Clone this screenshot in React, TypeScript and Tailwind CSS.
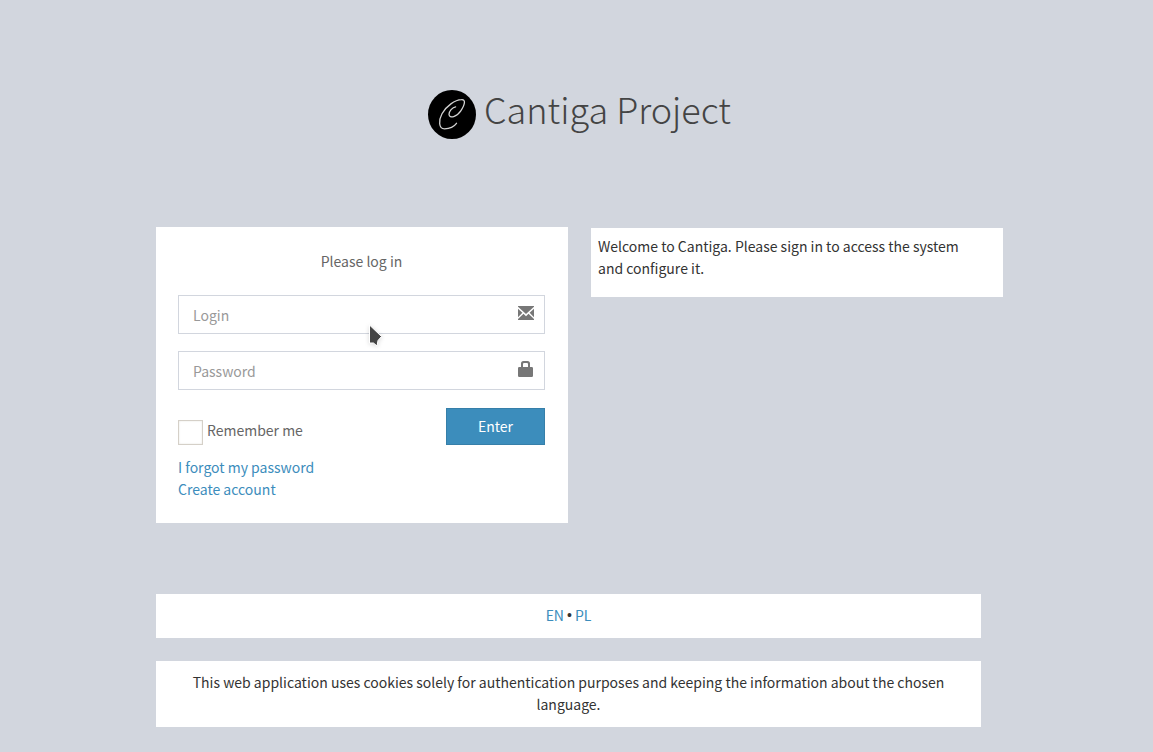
import { useState } from "react";

function Logo() {
  return (
    <svg viewBox="0 0 48 49" className="h-[49px] w-12 shrink-0" aria-hidden="true">
      <ellipse cx="24" cy="24.5" rx="24" ry="24.5" fill="#000" />
      <path
        d="M27.600 16.800C24.500 17.200 20.800 21.500 21 24.500C21.500 29.200 29 26.500 32.800 20.800C37 14.500 38 9.300 33.500 9.700C27 10 18.300 15.800 14 23.800C10.500 30.200 10.500 38.800 16.500 38.800C21.600 38.600 26.100 36.500 28.500 33.300"
        fill="none"
        stroke="#d4d4d4"
        strokeWidth="1.3"
        strokeLinecap="round"
      />
    </svg>
  );
}

function EnvelopeIcon() {
  return (
    <svg viewBox="0 0 16 14" className="h-[14px] w-4" fill="#777" aria-hidden="true">
      <path d="M0 0h16v.7L8 8.100 0 .7zM0 2.700l4.400 4L0 11.200zM16 2.700v8.500l-4.400-4.500zM5.500 7.800 8 10.200l2.500-2.400L16 13v1H0v-1z" />
    </svg>
  );
}

function LockIcon() {
  return (
    <svg viewBox="0 0 16 16" className="h-4 w-4" fill="#777" aria-hidden="true">
      <path
        fillRule="evenodd"
        d="M3 6V2.500Q3 0 5.500 0h4Q12 0 12 2.500V6h1.800q1.200 0 1.200 1.200v7.600q0 1.200-1.200 1.200H1.200Q0 16 0 14.800V7.200Q0 6 1.200 6zM5 6h5V3.300Q10 2 9 2H6Q5 2 5 3.300z"
      />
    </svg>
  );
}

function Pointer() {
  return (
    <svg viewBox="0 0 18 24" className="pointer-events-none absolute top-[97px] left-[212px] h-6 w-[18px] drop-shadow-sm" aria-hidden="true">
      <path d="M1.500 1v18h4l3.500 3 1-5.500 3.500-4z" fill="#444" stroke="#fff" />
    </svg>
  );
}

const field =
  "block h-[39px] w-full border border-[#d2d6de] bg-white pr-12 pl-[14px] pt-px text-[#555] placeholder:text-[#999] focus:outline-none focus:border-[#3c8dbc]";
const link = "text-[#3c8dbc] hover:text-[#72afd2]";

export default function App() {
  const [login, setLogin] = useState("");
  const [password, setPassword] = useState("");
  const [remember, setRemember] = useState(false);

  return (
    <div className="min-h-screen bg-[#d2d6de] pr-4 pb-[25px] font-['Source_Sans_Pro','Noto_Sans_CJK_SC',sans-serif] text-[14px] leading-[22px] text-[#333]">
      <div className="mx-auto max-w-[825px] pt-[85px]">
        <main className="-mr-[22px]">
          <header className="mb-[83px] flex h-[59px] items-center justify-center gap-2 text-[#444]">
            <Logo />
            <h1 className="-mt-3 text-[36px] leading-[51px] font-light">Cantiga Project</h1>
          </header>
          <div className="grid grid-cols-2 items-start gap-[23px]">
            <section className="relative bg-white pt-[23px] pr-[23px] pb-[23px] pl-[22px] text-[#666]">
              <h2 className="mb-[23px] text-center">Please log in</h2>
              <form onSubmit={(event) => event.preventDefault()}>
                <div className="relative mb-[17px]">
                  <input aria-label="Login" placeholder="Login" className={field} value={login} onChange={(e) => setLogin(e.target.value)} />
                  <span className="pointer-events-none absolute top-[11px] right-[11px]"><EnvelopeIcon /></span>
                </div>
                <div className="relative mb-[18px]">
                  <input type="password" aria-label="Password" placeholder="Password" className={field} value={password} onChange={(e) => setPassword(e.target.value)} />
                  <span className="pointer-events-none absolute top-[10px] right-[11px]"><LockIcon /></span>
                </div>
                <div className="mb-[11px] flex h-[37px] justify-between">
                  <label className="flex items-end gap-1">
                    <input
                      type="checkbox"
                      className="size-[25px] appearance-none border border-[#d5d0c8] bg-white shadow-[inset_0_0_2px_#e5e2dc] checked:bg-[#3c8dbc]"
                      checked={remember}
                      onChange={(e) => setRemember(e.target.checked)}
                    />
                    <span className="pb-1">Remember me</span>
                  </label>
                  <button type="submit" className="w-[99px] border border-[#367fa9] bg-[#3c8dbc] pb-0.5 text-white hover:bg-[#367fa9]">Enter</button>
                </div>
              </form>
              <a href="#forgot" className={`${link} block w-fit`}>I forgot my password</a>
              <a href="#register" className={`${link} block w-fit`}>Create account</a>
              <Pointer />
            </section>
            <aside className="mt-px bg-white pt-[7px] pr-[22px] pb-[18px] pl-[7px]">
              <p>Welcome to Cantiga. Please sign in to access the system and configure it.</p>
            </aside>
          </div>
        </main>
        <footer className="mt-[71px] flex flex-col gap-[23px] text-center">
          <nav className="flex justify-center gap-[3px] bg-white pt-[10px] pb-3">
            <a href="#en" className={link}>EN</a>
            <span className="font-['Liberation_Sans',sans-serif]">•</span>
            <a href="#pl" className={link}>PL</a>
          </nav>
          <p className="bg-white px-[22px] pt-[10px] pb-3">
            This web application uses cookies solely for authentication purposes and keeping the information about the chosen language.
          </p>
        </footer>
      </div>
    </div>
  );
}
